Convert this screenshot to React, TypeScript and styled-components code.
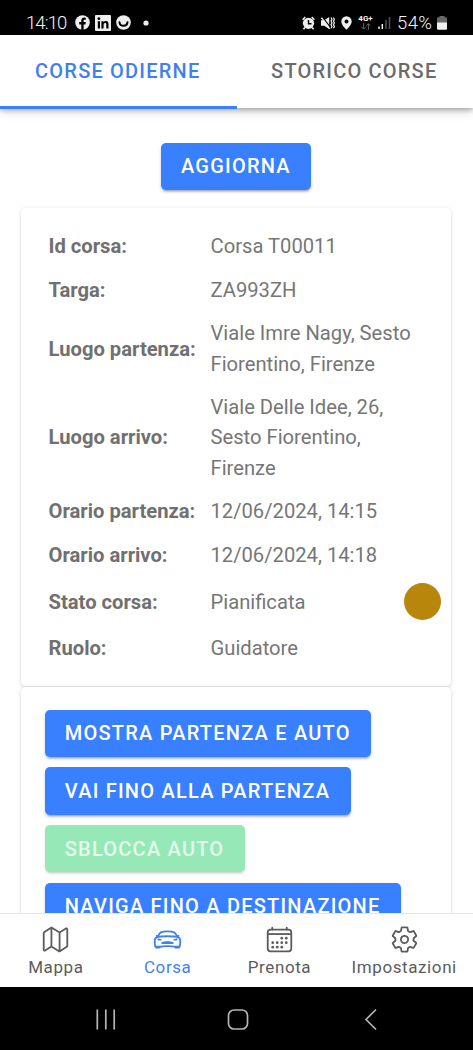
import React from 'react';
import styled, { createGlobalStyle } from 'styled-components';
import {
  IoMapOutline,
  IoCarSportOutline,
  IoCalendarOutline,
  IoSettingsOutline,
} from 'react-icons/io5';

const GlobalStyle = createGlobalStyle`
  *, *::before, *::after { box-sizing: border-box; }
  body {
    margin: 0;
    background: #fff;
    font-family: Roboto, "Liberation Sans", sans-serif;
    overflow: hidden;
  }
`;

const Screen = styled.div`
  display: flex;
  flex-direction: column;
  width: 473px;
  height: 1050px;
  overflow: hidden;
  background: #fff;
`;

const StatusBar = styled.header`
  flex: none;
  display: flex;
  justify-content: space-between;
  height: 35px;
  padding: 9px 26px 0 26px;
  background: #000;
  color: #f4f4f4;
`;

const StatusGroup = styled.div`
  display: flex;
  align-items: center;
  height: 27px;
`;

const StatusText = styled.span<{ $width: number; $spacing?: number; $left?: number }>`
  width: ${(p) => p.$width}px;
  margin-left: ${(p) => p.$left ?? 0}px;
  font-size: 18.5px;
  font-weight: 350;
  line-height: 26px;
  letter-spacing: ${(p) => p.$spacing ?? 0}px;
  white-space: nowrap;
`;

const StatusIcon = styled.svg<{ $left?: number }>`
  flex: none;
  display: block;
  margin-left: ${(p) => p.$left ?? 0}px;
`;

const NetworkBadge = styled.div`
  flex: none;
  display: flex;
  flex-direction: column;
  align-items: center;
  width: 15px;
  margin-left: 6px;
  font-size: 8px;
  font-weight: 700;
  line-height: 8px;
`;

const SegmentBar = styled.nav`
  flex: none;
  display: flex;
  height: 73px;
  background: #fff;
  box-shadow: 0 2px 5px rgba(0, 0, 0, 0.28), 0 4px 10px rgba(0, 0, 0, 0.13);
  z-index: 1;
`;

const Segment = styled.button<{ $active?: boolean }>`
  flex: 1;
  height: 73.6px;
  padding: 1px 1px 0 0;
  border: 0;
  border-bottom: 3px solid ${(p) => (p.$active ? '#3880ff' : 'transparent')};
  background: none;
  color: ${(p) => (p.$active ? '#3f7fee' : '#6b6b6b')};
  font: 500 20px/24px Roboto, sans-serif;
  letter-spacing: 1.2px;
  white-space: nowrap;
`;

const Content = styled.main`
  flex: 1;
  min-height: 0;
  display: flex;
  flex-direction: column;
  padding: 34.5px 22px 0 21px;
  overflow: hidden;
`;

const ActionButton = styled.button<{ $tone?: 'primary' | 'success' }>`
  flex: none;
  height: 47.3px;
  padding: 0 20.4px 0 20.2px;
  border: 0;
  border-radius: 5px;
  background: ${(p) => (p.$tone === 'success' ? '#96e9b7' : '#3880ff')};
  color: ${(p) => (p.$tone === 'success' ? '#e2faeb' : '#fff')};
  box-shadow: 0 3px 2px -2px rgba(0, 0, 0, ${(p) => (p.$tone === 'success' ? 0.1 : 0.2)}),
    0 2px 3px rgba(0, 0, 0, ${(p) => (p.$tone === 'success' ? 0.1 : 0.22)});
  font: 500 20px/24px Roboto, sans-serif;
  letter-spacing: 1.22px;
  white-space: nowrap;
`;

const RefreshButton = styled(ActionButton)`
  align-self: center;
`;

const Card = styled.section`
  flex: none;
  border-radius: 5px;
  background: #fff;
  box-shadow: 0 1px 4px rgba(0, 0, 0, 0.16);
`;

const DetailsCard = styled(Card)`
  margin-top: 18px;
  padding: 17px 10px 16px 27.5px;
`;

const ActionsCard = styled(Card)`
  display: flex;
  flex-direction: column;
  align-items: flex-start;
  gap: 10.4px;
  margin-top: 1px;
  padding: 22.5px 24px 30px 23.6px;
`;

const DetailRow = styled.div`
  display: flex;
  align-items: center;
  padding: 6.6px 0;
  color: #767676;
  font-size: 20.2px;
  line-height: 30.3px;
`;

const Label = styled.strong`
  flex: none;
  width: 162px;
  font-weight: 700;
  color: #707070;
  white-space: nowrap;
`;

const Value = styled.span`
  flex: 0 1 206px;
`;

const StatusDot = styled.i`
  flex: none;
  width: 37px;
  height: 37px;
  margin-left: auto;
  border-radius: 50%;
  background: #b8860b;
`;

const TabBar = styled.nav`
  flex: none;
  display: grid;
  grid-template-columns: 111.8px 111.8px 111.8px 1fr;
  height: 74px;
  border-top: 1px solid #e6e6e6;
  background: #fff;
`;

const Tab = styled.a<{ $active?: boolean }>`
  display: flex;
  flex-direction: column;
  align-items: center;
  padding-top: 11px;
  color: ${(p) => (p.$active ? '#3f80f5' : '#5c5c5c')};
  font-size: 17px;
  line-height: 20px;
  letter-spacing: 0.6px;
  svg {
    width: 29px;
    height: 29px;
    margin-bottom: 3px;
  }
`;

const SystemBar = styled.footer`
  flex: none;
  height: 63px;
  background: #000;
`;

type Detail = { label: string; value: string; dot?: boolean };

const details: Detail[] = [
  { label: 'Id corsa:', value: 'Corsa T00011' },
  { label: 'Targa:', value: 'ZA993ZH' },
  { label: 'Luogo partenza:', value: 'Viale Imre Nagy, Sesto Fiorentino, Firenze' },
  { label: 'Luogo arrivo:', value: 'Viale Delle Idee, 26, Sesto Fiorentino, Firenze' },
  { label: 'Orario partenza:', value: '12/06/2024, 14:15' },
  { label: 'Orario arrivo:', value: '12/06/2024, 14:18' },
  { label: 'Stato corsa:', value: 'Pianificata', dot: true },
  { label: 'Ruolo:', value: 'Guidatore' },
];

const tabs = [
  { name: 'Mappa', Icon: IoMapOutline },
  { name: 'Corsa', Icon: IoCarSportOutline },
  { name: 'Prenota', Icon: IoCalendarOutline },
  { name: 'Impostazioni', Icon: IoSettingsOutline },
];

function PhoneStatus() {
  return (
    <StatusBar>
      <StatusGroup>
        <StatusText $width={48.5} $spacing={-0.9}>14:10</StatusText>
        <StatusIcon width="15" height="15" viewBox="0 0 15 15">
          <circle cx="7.5" cy="7.5" r="7.3" fill="#eee" />
          <path d="M6.3 15V9.4H4.2V7h2.1V5.7C6.3 3.6 7.5 2.6 9.2 2.6l1.6.1v2H9.7c-.9 0-1.1.5-1.1 1.1V7h2.2l-.4 2.4H8.6V15z" fill="#000" />
        </StatusIcon>
        <StatusIcon $left={5} width="16" height="16" viewBox="0 0 16 16">
          <rect width="16" height="16" rx="1" fill="#eee" />
          <circle cx="3.9" cy="3.7" r="1.4" fill="#000" />
          <path d="M2.8 6.2H5v7.2H2.8zM6.4 6.2h2.1v1c.5-.8 1.3-1.2 2.3-1.2 2 0 2.7 1.2 2.7 3.3v4.1h-2.2V9.6c0-1-.3-1.6-1.2-1.6-1.1 0-1.5.8-1.5 1.8v3.6H6.4z" fill="#000" />
        </StatusIcon>
        <StatusIcon $left={5} width="15" height="15" viewBox="0 0 15 15">
          <circle cx="7.5" cy="7.5" r="7.3" fill="#eee" />
          <path d="M3.5 7.3c.6 4.6 7.4 4.6 8 0" fill="none" stroke="#000" strokeWidth="2" strokeLinecap="round" />
        </StatusIcon>
        <StatusIcon $left={12} width="6" height="6" viewBox="0 0 6 6">
          <circle cx="3" cy="3" r="2.6" fill="#eee" />
        </StatusIcon>
      </StatusGroup>
      <StatusGroup>
        <StatusIcon width="13" height="14" viewBox="0 0 13 14">
          <circle cx="6.5" cy="7.3" r="5.6" fill="#eee" />
          <path d="M.6 3.7 3.3 1M12.4 3.7 9.7 1M2.8 11.6l-1.3 1.7M10.2 11.6l1.3 1.7" stroke="#eee" strokeWidth="1.6" />
          <path d="M6.5 4v3.7h3" fill="none" stroke="#000" strokeWidth="1.4" />
        </StatusIcon>
        <StatusIcon $left={6} width="14" height="14" viewBox="0 0 14 14">
          <path d="M0 4.3h3.2L8.2 1v12L3.2 9.7H0z" fill="#eee" />
          <path d="M1.4.8 9.6 11.6" stroke="#000" strokeWidth="1.1" />
          <path d="M.4 1.6 8.7 12.8" stroke="#eee" strokeWidth="1.3" />
          <path d="m10 1.5 1 1.8-1 1.8 1 1.8-1 1.8 1 1.8-1 1.8M12.4 1.5l1 1.8-1 1.8 1 1.8-1 1.8 1 1.8-1 1.8" fill="none" stroke="#eee" strokeWidth="1.2" />
        </StatusIcon>
        <StatusIcon $left={6.5} width="11" height="14" viewBox="0 0 11 14">
          <path fillRule="evenodd" d="M5.5.3A5.2 5.2 0 0 0 .3 5.5c0 3.7 5.2 8.2 5.2 8.2s5.2-4.5 5.2-8.2A5.2 5.2 0 0 0 5.5.3m0 3.2a2 2 0 1 1 0 4 2 2 0 0 1 0-4" fill="#eee" />
        </StatusIcon>
        <NetworkBadge>
          4G+
          <StatusIcon width="10" height="7" viewBox="0 0 10 7">
            <path d="M2.6 0v6M.6 4.1l2 2 2-2M7.4 6.8v-6M5.4 2.7l2-2 2 2" fill="none" stroke="#666" />
          </StatusIcon>
        </NetworkBadge>
        <StatusIcon $left={5} width="13" height="13" viewBox="0 0 13 13">
          <path d="M1 10.5V13M4.3 8v5" stroke="#eee" strokeWidth="1.5" />
          <path d="M8 4v9M11.5 1v12" stroke="#555" strokeWidth="1.5" />
        </StatusIcon>
        <StatusText $width={40} $left={6} $spacing={0.4}>54%</StatusText>
        <StatusIcon width="10" height="14" viewBox="0 0 10 14">
          <path d="M2.5 0h5v1.3H9q1 0 1 1V7H0V2.3q0-1 1-1h1.5z" fill="#666" />
          <path d="M0 6.5h10v6q0 1.2-1 1.2H1q-1 0-1-1.2z" fill="#eee" />
        </StatusIcon>
      </StatusGroup>
    </StatusBar>
  );
}

export default function App() {
  return (
    <Screen>
      <GlobalStyle />
      <PhoneStatus />
      <SegmentBar>
        <Segment $active>CORSE ODIERNE</Segment>
        <Segment>STORICO CORSE</Segment>
      </SegmentBar>
      <Content>
        <RefreshButton>AGGIORNA</RefreshButton>
        <DetailsCard>
          {details.map((d) => (
            <DetailRow key={d.label}>
              <Label>{d.label}</Label>
              <Value>{d.value}</Value>
              {d.dot && <StatusDot />}
            </DetailRow>
          ))}
        </DetailsCard>
        <ActionsCard>
          <ActionButton>MOSTRA PARTENZA E AUTO</ActionButton>
          <ActionButton>VAI FINO ALLA PARTENZA</ActionButton>
          <ActionButton $tone="success" disabled>SBLOCCA AUTO</ActionButton>
          <ActionButton>NAVIGA FINO A DESTINAZIONE</ActionButton>
        </ActionsCard>
      </Content>
      <TabBar>
        {tabs.map(({ name, Icon }) => (
          <Tab key={name} $active={name === 'Corsa'}>
            <Icon />
            {name}
          </Tab>
        ))}
      </TabBar>
      <SystemBar>
        <svg width="473" height="63" viewBox="0 0 473 63" fill="none" stroke="#b5b5b5" strokeWidth="1.7">
          <path d="M97.3 22.5v20M105.8 22.5v20M114.2 22.5v20" />
          <rect x="228.5" y="23" width="19" height="19" rx="5.5" />
          <path d="m376 22.5-10 10 10 10" />
        </svg>
      </SystemBar>
    </Screen>
  );
}
